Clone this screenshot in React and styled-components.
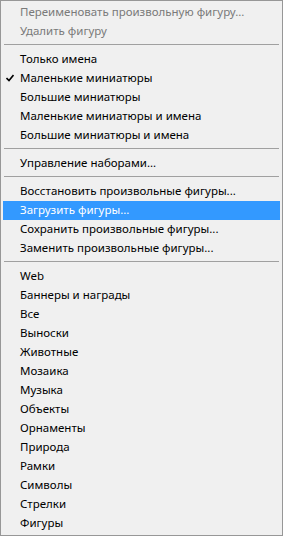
import styled, { createGlobalStyle } from "styled-components";

const Global = createGlobalStyle`
  html, body {
    margin: 0;
    padding: 0;
    background: #f0f0f0;
  }
`;

const Menu = styled.div`
  box-sizing: border-box;
  width: 283px;
  height: 536px;
  background: #f0f0f0;
  border: 1px solid #979797;
  padding: 2px;
  font-family: "Noto Sans", "Open Sans", sans-serif;
  font-size: 11.5px;
  display: flex;
  flex-direction: column;
`;

const Item = styled.div`
  position: relative;
  height: 19px;
  line-height: 18px;
  padding-left: 17px;
  white-space: nowrap;
  color: ${(p) => (p.$disabled ? "#7a7a7a" : p.$active ? "#ffffff" : "#000000")};
  background: ${(p) => (p.$active ? "#3399ff" : "transparent")};
`;

const Check = styled.svg`
  position: absolute;
  left: 3px;
  top: 5px;
`;

const Separator = styled.div`
  height: 9px;
  padding: 3px 1px 0 1px;
  box-sizing: border-box;

  &::before {
    content: "";
    display: block;
    height: 1px;
    background: #a0a0a0;
  }
`;

const groups = [
  [
    { label: "Переименовать произвольную фигуру...", disabled: true },
    { label: "Удалить фигуру", disabled: true },
  ],
  [
    { label: "Только имена" },
    { label: "Маленькие миниатюры", checked: true },
    { label: "Большие миниатюры" },
    { label: "Маленькие миниатюры и имена" },
    { label: "Большие миниатюры и имена" },
  ],
  [{ label: "Управление наборами..." }],
  [
    { label: "Восстановить произвольные фигуры..." },
    { label: "Загрузить фигуры...", active: true },
    { label: "Сохранить произвольные фигуры..." },
    { label: "Заменить произвольные фигуры..." },
  ],
  [
    { label: "Web" },
    { label: "Баннеры и награды" },
    { label: "Все" },
    { label: "Выноски" },
    { label: "Животные" },
    { label: "Мозаика" },
    { label: "Музыка" },
    { label: "Объекты" },
    { label: "Орнаменты" },
    { label: "Природа" },
    { label: "Рамки" },
    { label: "Символы" },
    { label: "Стрелки" },
    { label: "Фигуры" },
  ],
];

export default function App() {
  return (
    <>
      <Global />
      <Menu>
        {groups.map((group, gi) => (
          <div key={gi}>
            {gi > 0 && <Separator />}
            {group.map((item) => (
              <Item key={item.label} $disabled={item.disabled} $active={item.active}>
                {item.checked && (
                  <Check width="8" height="8" viewBox="0 0 8 8">
                    <path d="M0.5 4 L3 6.5 L7.5 1" fill="none" stroke="#000" strokeWidth="1.6" />
                  </Check>
                )}
                {item.label}
              </Item>
            ))}
          </div>
        ))}
      </Menu>
    </>
  );
}
